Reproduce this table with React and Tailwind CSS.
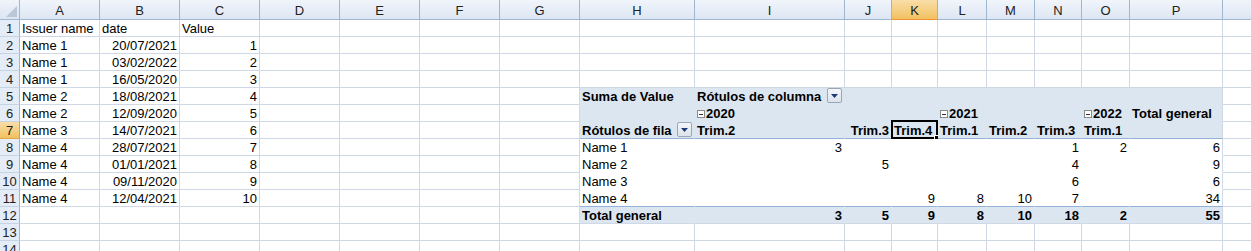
import clsx from "clsx";

const letters = ["A", "B", "C", "D", "E", "F", "G", "H", "I", "J", "K", "L", "M", "N", "O", "P", "Q"];

const left = [
  ["Name 1", "20/07/2021", 1],
  ["Name 1", "03/02/2022", 2],
  ["Name 1", "16/05/2020", 3],
  ["Name 2", "18/08/2021", 4],
  ["Name 2", "12/09/2020", 5],
  ["Name 3", "14/07/2021", 6],
  ["Name 4", "28/07/2021", 7],
  ["Name 4", "01/01/2021", 8],
  ["Name 4", "09/11/2020", 9],
  ["Name 4", "12/04/2021", 10],
];

// cell contents keyed "row-col" (col 1 = A)
const cells = {
  "1-1": { t: "Issuer name" },
  "1-2": { t: "date" },
  "1-3": { t: "Value" },
  "5-8": { t: "Suma de Value", b: true },
  "5-9": { t: "Rótulos de columna", b: true, btn: true },
  "6-9": { t: "2020", b: true, box: true },
  "6-12": { t: "2021", b: true, box: true },
  "6-15": { t: "2022", b: true, box: true },
  "6-16": { t: "Total general", b: true },
  "7-8": { t: "Rótulos de fila", b: true, btn: true },
  "7-9": { t: "Trim.2", b: true },
  "7-10": { t: "Trim.3", b: true, r: true },
  "7-11": { t: "Trim.4", b: true },
  "7-12": { t: "Trim.1", b: true },
  "7-13": { t: "Trim.2", b: true },
  "7-14": { t: "Trim.3", b: true },
  "7-15": { t: "Trim.1", b: true },
  "8-8": { t: "Name 1" },
  "8-9": { t: "3", r: true },
  "8-14": { t: "1", r: true },
  "8-15": { t: "2", r: true },
  "8-16": { t: "6", r: true },
  "9-8": { t: "Name 2" },
  "9-10": { t: "5", r: true },
  "9-14": { t: "4", r: true },
  "9-16": { t: "9", r: true },
  "10-8": { t: "Name 3" },
  "10-14": { t: "6", r: true },
  "10-16": { t: "6", r: true },
  "11-8": { t: "Name 4" },
  "11-11": { t: "9", r: true },
  "11-12": { t: "8", r: true },
  "11-13": { t: "10", r: true },
  "11-14": { t: "7", r: true },
  "11-16": { t: "34", r: true },
  "12-8": { t: "Total general", b: true },
  "12-9": { t: "3", r: true, b: true },
  "12-10": { t: "5", r: true, b: true },
  "12-11": { t: "9", r: true, b: true },
  "12-12": { t: "8", r: true, b: true },
  "12-13": { t: "10", r: true, b: true },
  "12-14": { t: "18", r: true, b: true },
  "12-15": { t: "2", r: true, b: true },
  "12-16": { t: "55", r: true, b: true },
};

left.forEach(([name, date, val], i) => {
  cells[`${i + 2}-1`] = { t: name };
  cells[`${i + 2}-2`] = { t: date, r: true };
  cells[`${i + 2}-3`] = { t: String(val), r: true };
});

function DropButton() {
  return (
    <span className="absolute right-[2px] top-0 flex h-[15px] w-[15px] items-center justify-center rounded-[2px] border border-[#9aa6b8] bg-gradient-to-b from-[#f4f6fa] to-[#dde3ec]">
      <svg width="7" height="4" viewBox="0 0 7 4">
        <path d="M0 0H7L3.5 4Z" fill="#1f3a78" />
      </svg>
    </span>
  );
}

function MinusBox() {
  return (
    <span className="mr-[1px] mb-[3px] inline-flex h-[8px] w-[8px] items-center justify-center border border-[#8a8a8a] bg-white">
      <span className="h-px w-[4px] bg-[#333]" />
    </span>
  );
}

function Cell({ r, c }) {
  const d = cells[`${r}-${c}`];
  const pivot = r >= 5 && r <= 12 && c >= 8 && c <= 16;
  const blue = pivot && (r <= 7 || r === 12);
  const selected = r === 7 && c === 11;

  return (
    <div
      className={clsx(
        "relative flex h-[17px] items-end whitespace-nowrap border-r border-b px-[2px] text-[13px] leading-[13px] text-[#000]",
        blue ? "bg-[#dce6f1]" : "bg-white",
        pivot
          ? c === 16
            ? "border-r-[#d0d7e5]"
            : "border-r-transparent"
          : "border-r-[#d0d7e5]",
        pivot
          ? r === 7 || r === 11
            ? "border-b-[#95b3d7]"
            : r === 12
            ? "border-b-[#d0d7e5]"
            : "border-b-transparent"
          : "border-b-[#d0d7e5]",
        d && d.r && "justify-end",
        d && d.b && "font-bold"
      )}
    >
      {d && d.box && <MinusBox />}
      {d && <span className="pb-px">{d.t}</span>}
      {d && d.btn && <DropButton />}
      {selected && (
        <span className="pointer-events-none absolute -left-[1px] -top-[2px] -right-[1px] -bottom-[1px] border-2 border-[#000]">
          <span className="absolute -right-[4px] -bottom-[4px] h-[6px] w-[6px] border border-white bg-[#000]" />
        </span>
      )}
    </div>
  );
}

export default function App() {
  const rows = Array.from({ length: 14 }, (_, i) => i + 1);

  return (
    <div className="h-[251px] w-[1251px] overflow-hidden bg-white font-['Liberation_Sans',Arial,sans-serif]">
      <div className="grid grid-cols-[20px_80px_80px_80px_80px_80px_80px_80px_115px_150px_47px_46px_49px_48px_47px_48px_93px_110px]">
        {/* corner */}
        <div className="relative h-[20px] border-r border-b border-[#9eb6ce] bg-gradient-to-b from-[#f0f4fa] to-[#dce5f2]">
          <svg className="absolute right-[2px] bottom-[2px]" width="11" height="11" viewBox="0 0 11 11">
            <path d="M11 0V11H0Z" fill="#b9c7d9" />
          </svg>
        </div>
        {letters.map((l, i) => (
          <div
            key={l}
            className={clsx(
              "flex h-[20px] items-center justify-center border-r border-b text-[13px] leading-none",
              i === 10
                ? "border-r-[#e3a84f] border-b-[#f29436] bg-gradient-to-b from-[#f9dea8] to-[#f1c15f] text-[#222]"
                : "border-r-[#9eb6ce] border-b-[#9eb6ce] bg-gradient-to-b from-[#f1f5fb] to-[#dde6f3] text-[#222]"
            )}
          >
            {i < 16 && <span className="pt-[1px]">{l}</span>}
          </div>
        ))}

        {rows.map((r) => (
          <div key={r} className="contents">
            <div
              className={clsx(
                "flex h-[17px] items-center justify-center border-r border-b text-[13px] leading-none",
                r === 7
                  ? "border-r-[#f29436] border-b-[#e3a84f] bg-gradient-to-b from-[#f9dea8] to-[#f1c15f] text-[#222]"
                  : "border-r-[#9eb6ce] border-b-[#c5d3e3] bg-[#e4ecf7] text-[#222]"
              )}
            >
              {r}
            </div>
            {letters.map((l, i) => (
              <Cell key={l} r={r} c={i + 1} />
            ))}
          </div>
        ))}
      </div>
    </div>
  );
}
